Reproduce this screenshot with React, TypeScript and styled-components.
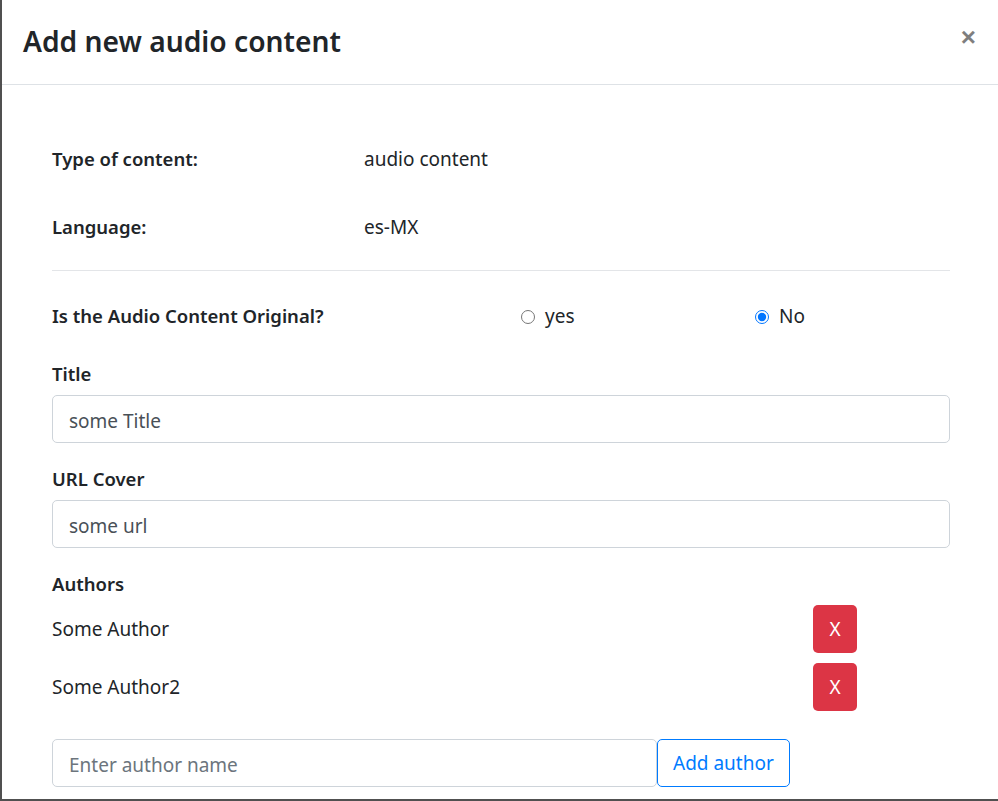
import styled, { createGlobalStyle } from "styled-components";

const GlobalStyle = createGlobalStyle`
  body {
    margin: 0;
    font-family: "Noto Sans", "Open Sans", sans-serif;
    color: #212529;
    background: #4a4a4a;
  }
  * { box-sizing: border-box; }
`;

const Backdrop = styled.div`
  display: flex;
  height: 801px;
  padding: 0 0 2px 2px;
  background: #505050;
`;

const Modal = styled.div`
  flex: 1;
  background: #fff;
  overflow: hidden;
`;

const Header = styled.header`
  display: flex;
  align-items: center;
  justify-content: space-between;
  height: 85px;
  padding: 0 22px 0 21px;
  border-bottom: 1px solid #dee2e6;
`;

const Title = styled.h3`
  margin: 0;
  font-size: 28.2px;
  font-weight: 600;
  line-height: 1.2;
`;

const Close = styled.button`
  border: 0;
  background: transparent;
  padding: 0;
  margin-bottom: 10px;
  font-family: "Liberation Sans", sans-serif;
  font-size: 26px;
  font-weight: 700;
  line-height: 1;
  color: #000;
  opacity: 0.5;
  cursor: pointer;
`;

const Body = styled.div`
  padding: 62px 48px 0 50px;
  font-size: 19px;
`;

const InfoRow = styled.div`
  display: grid;
  grid-template-columns: 312px 1fr;
  line-height: 24px;
  margin-bottom: 44px;
`;

const Label = styled.div`
  font-weight: 600;
  font-size: 18.5px;
`;

const Divider = styled.hr`
  margin: -13px 0 33px;
  border: 0;
  border-top: 1px solid #e3e5e8;
`;

const RadioRow = styled.div`
  display: grid;
  grid-template-columns: 463px 234px 1fr;
  align-items: center;
  line-height: 24px;
  margin-bottom: 34px;
`;

const RadioOption = styled.label`
  display: flex;
  align-items: center;
  gap: 10px;
  font-size: 19px;
  input {
    margin: 2px 0 0 6px;
    width: 14px;
    height: 14px;
    accent-color: #0075ff;
  }
`;

const Field = styled.div`
  display: flex;
  flex-direction: column;
  gap: 9px;
  margin-bottom: 24px;
`;

const FieldLabel = styled.div`
  font-weight: 600;
  font-size: 18.5px;
  line-height: 24px;
`;

const Input = styled.input`
  width: 100%;
  height: 48px;
  padding: 3px 16px 0;
  font-family: inherit;
  font-size: 19px;
  color: #495057;
  border: 1px solid #ced4da;
  border-radius: 5px;
  background: #fff;
  outline: none;
  &::placeholder {
    color: #6c757d;
  }
`;

const AuthorList = styled.div`
  display: flex;
  flex-direction: column;
  gap: 10px;
`;

const AuthorRow = styled.div`
  display: grid;
  grid-template-columns: 761px auto;
  align-items: center;
`;

const DangerButton = styled.button`
  width: 44px;
  height: 48px;
  border: 0;
  border-radius: 5px;
  background: #dc3545;
  color: #fff;
  font-family: inherit;
  font-size: 19px;
  padding: 0;
`;

const AddRow = styled.div`
  display: flex;
  margin-top: 28px;
  ${Input} {
    width: 605px;
  }
`;

const OutlineButton = styled.button`
  height: 48px;
  padding: 0 15px;
  border: 1px solid #007bff;
  border-radius: 5px;
  background: #fff;
  color: #007bff;
  font-family: inherit;
  font-size: 19px;
`;

export default function App() {
  const authors = ["Some Author", "Some Author2"];
  return (
    <>
      <GlobalStyle />
      <Backdrop>
        <Modal>
          <Header>
            <Title>Add new audio content</Title>
            <Close aria-label="Close">×</Close>
          </Header>
          <Body>
            <InfoRow>
              <Label>Type of content:</Label>
              <div>audio content</div>
            </InfoRow>
            <InfoRow>
              <Label>Language:</Label>
              <div>es-MX</div>
            </InfoRow>
            <Divider />
            <RadioRow>
              <Label>Is the Audio Content Original?</Label>
              <RadioOption>
                <input type="radio" name="orig" />
                yes
              </RadioOption>
              <RadioOption>
                <input type="radio" name="orig" defaultChecked />
                No
              </RadioOption>
            </RadioRow>
            <Field>
              <FieldLabel>Title</FieldLabel>
              <Input defaultValue="some Title" />
            </Field>
            <Field>
              <FieldLabel>URL Cover</FieldLabel>
              <Input defaultValue="some url" />
            </Field>
            <Field>
              <FieldLabel>Authors</FieldLabel>
              <AuthorList>
                {authors.map((a) => (
                  <AuthorRow key={a}>
                    <span>{a}</span>
                    <DangerButton>X</DangerButton>
                  </AuthorRow>
                ))}
              </AuthorList>
            </Field>
            <AddRow>
              <Input placeholder="Enter author name" />
              <OutlineButton>Add author</OutlineButton>
            </AddRow>
          </Body>
        </Modal>
      </Backdrop>
    </>
  );
}
